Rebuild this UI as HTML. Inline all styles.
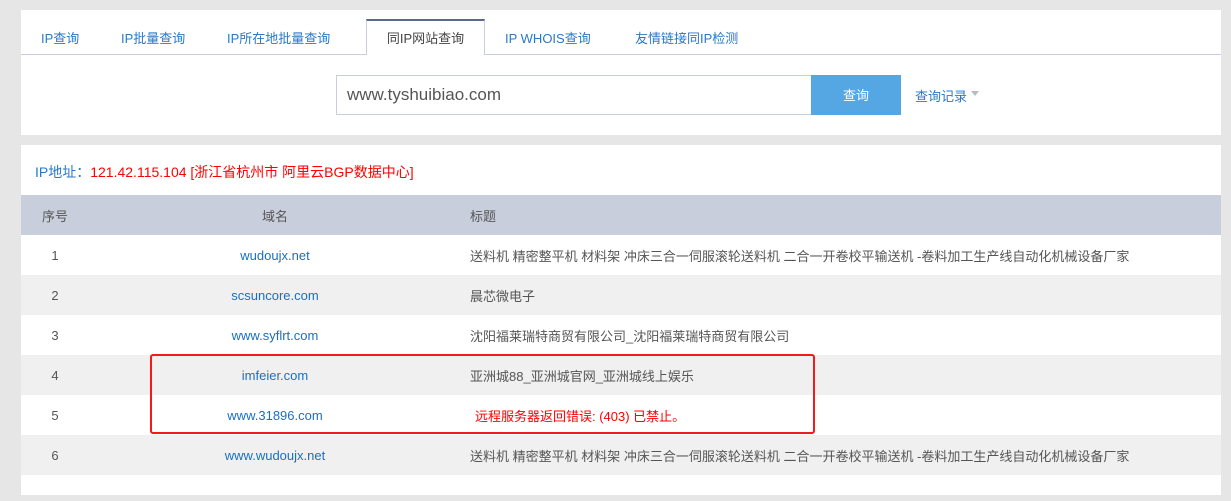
<!DOCTYPE html>
<html><head><meta charset="utf-8"><style>
*{margin:0;padding:0;box-sizing:border-box}
body{width:1231px;height:501px;background:#e6e6e6;font-family:"Liberation Sans","Noto Sans CJK SC",sans-serif;font-size:13px;position:relative;overflow:hidden}
.p1{position:absolute;left:21px;top:10px;width:1200px;height:125px;background:#fff}
.tabs{position:absolute;left:0;top:44px;width:1200px;border-top:1px solid #c8cedc}
.tab{position:absolute;top:18px;font-size:13px;color:#2a78c8}
.act{position:absolute;left:345px;top:9px;width:119px;height:36px;background:#fff;border:1px solid #c8cedc;border-top:2px solid #5a6a86;border-bottom:none;color:#444;text-align:center;line-height:36px}
.inp{position:absolute;left:315px;top:65px;width:476px;height:40px;border:1px solid #c8cedc;border-right:none;font-size:17px;color:#555;padding-left:10px;line-height:38px}
.btn{position:absolute;left:790px;top:65px;width:90px;height:40px;background:#55a7e3;color:#fff;text-align:center;line-height:42px}
.rec{position:absolute;left:894px;top:76px;color:#2a78c8}
.rec i{display:inline-block;width:0;height:0;border:4px solid transparent;border-top:5px solid #bbb;margin-left:4px;vertical-align:1px}
.p2{position:absolute;left:21px;top:145px;width:1200px;height:350px;background:#fff}
.ip{position:absolute;left:14px;top:17px;font-size:14px;color:#f00}
.ip span{color:#2a78c8}
table{position:absolute;left:0;top:50px;width:1200px;border-collapse:collapse}
td,th{height:40px;font-weight:normal;color:#555;font-size:13px}
th{background:#c8cedc}
tr:nth-child(odd) td{background:#f0f0f0}
.c1{width:68px;text-align:center}
.c2{width:372px;text-align:center;color:#1a6fc0}
.c3{text-align:left;padding-left:9px}
.box{position:absolute;left:150px;top:354px;width:665px;height:80px;border:2.5px solid #f21a1a;border-radius:3px}
</style></head><body>
<div class="p1">
<div class="tabs"></div>
<div class="tab" style="left:20px">IP查询</div>
<div class="tab" style="left:100px">IP批量查询</div>
<div class="tab" style="left:206px">IP所在地批量查询</div>
<div class="act">同IP网站查询</div>
<div class="tab" style="left:484px">IP WHOIS查询</div>
<div class="tab" style="left:614px">友情链接同IP检测</div>
<div class="inp">www.tyshuibiao.com</div>
<div class="btn">查询</div>
<div class="rec">查询记录<i></i></div>
</div>
<div class="p2">
<div class="ip"><span>IP地址：</span>121.42.115.104 [浙江省杭州市 阿里云BGP数据中心]</div>
<table>
<tr><th class="c1">序号</th><th class="c2" style="color:#555">域名</th><th class="c3">标题</th></tr>
<tr><td class="c1">1</td><td class="c2">wudoujx.net</td><td class="c3">送料机 精密整平机 材料架 冲床三合一伺服滚轮送料机 二合一开卷校平输送机 -卷料加工生产线自动化机械设备厂家</td></tr>
<tr><td class="c1">2</td><td class="c2">scsuncore.com</td><td class="c3">晨芯微电子</td></tr>
<tr><td class="c1">3</td><td class="c2">www.syflrt.com</td><td class="c3">沈阳福莱瑞特商贸有限公司_沈阳福莱瑞特商贸有限公司</td></tr>
<tr><td class="c1">4</td><td class="c2">imfeier.com</td><td class="c3">亚洲城88_亚洲城官网_亚洲城线上娱乐</td></tr>
<tr><td class="c1">5</td><td class="c2">www.31896.com</td><td class="c3" style="color:#f00;padding-left:14px">远程服务器返回错误: (403) 已禁止。</td></tr>
<tr><td class="c1">6</td><td class="c2">www.wudoujx.net</td><td class="c3">送料机 精密整平机 材料架 冲床三合一伺服滚轮送料机 二合一开卷校平输送机 -卷料加工生产线自动化机械设备厂家</td></tr>
</table>
</div>
<div class="box"></div>
</body></html>
